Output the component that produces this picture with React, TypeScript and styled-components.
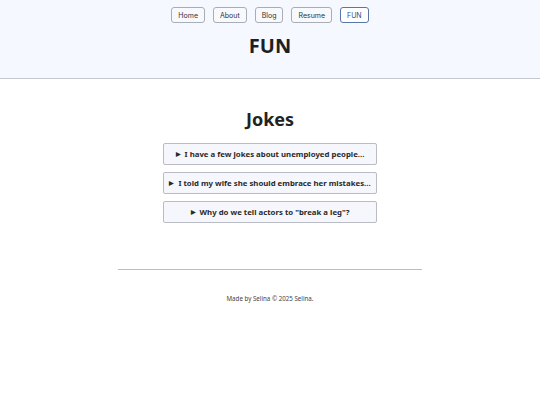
import styled, { createGlobalStyle } from "styled-components";

const GlobalStyle = createGlobalStyle`
    body {
        margin: 0;
        background: #ffffff;
        font-family: "Noto Sans", "Open Sans", sans-serif;
        color: #222222;
    }
`;

const Header = styled.header`
    background-color: #f5f8ff;
    border-bottom: 1px solid #c4c7cf;
    padding: 7px 0 0;
    height: 71px;
    display: flex;
    flex-direction: column;
    align-items: center;
`;

const Nav = styled.nav`
    display: flex;
    gap: 8px;
`;

const NavButton = styled.a<{ $active?: boolean }>`
    display: inline-flex;
    align-items: center;
    height: 14px;
    padding: 0 6px;
    border: 1px solid ${(p) => (p.$active ? "#5a76a8" : "#a9adb6")};
    border-radius: 3px;
    background: ${(p) => (p.$active ? "#ffffff" : "#f7f9fd")};
    color: ${(p) => (p.$active ? "#2d4f8a" : "#333333")};
    font-family: "Inter", "Noto Sans", sans-serif;
    font-size: 7px;
    text-decoration: none;
`;

const PageTitle = styled.h1`
    margin: 9px 0 0;
    font-size: 20px;
    font-weight: 700;
    color: #1f1f1f;
`;

const Main = styled.main`
    display: flex;
    flex-direction: column;
    align-items: center;
    padding-top: 28px;
`;

const SectionTitle = styled.h2`
    margin: 0 0 11px;
    font-size: 18px;
    line-height: 25px;
    font-weight: 700;
    color: #222222;
`;

const JokeList = styled.div`
    display: flex;
    flex-direction: column;
    gap: 7px;
    width: 214px;
`;

const Joke = styled.details`
    border: 1px solid #b9bcc4;
    border-radius: 2px;
    background: #f5f7fc;
`;

const JokeSummary = styled.summary`
    list-style: none;
    height: 20px;
    display: flex;
    align-items: center;
    justify-content: center;
    font-size: 7.8px;
    font-weight: 700;
    color: #2a2a2a;
    cursor: pointer;
    white-space: nowrap;

    &::-webkit-details-marker {
        display: none;
    }
    &::before {
        content: "▶";
        font-size: 6px;
        margin-right: 4px;
    }
`;

const Footer = styled.footer`
    display: flex;
    flex-direction: column;
    align-items: center;
    margin-top: 46px;
`;

const Rule = styled.hr`
    width: 304px;
    margin: 0;
    border: none;
    border-top: 1px solid #bdbdbd;
`;

const FooterText = styled.p`
    margin: 24px 0 0;
    font-size: 6.2px;
    color: #444444;
`;

const pages = ["Home", "About", "Blog", "Resume", "FUN"];

const jokes = [
    "I have a few jokes about unemployed people...",
    "I told my wife she should embrace her mistakes...",
    "Why do we tell actors to \"break a leg\"?",
];

const App = () => {
    return (
        <>
            <GlobalStyle />
            <Header>
                <Nav>
                    {pages.map((page) => (
                        <NavButton key={page} href="#" $active={page === "FUN"}>
                            {page}
                        </NavButton>
                    ))}
                </Nav>
                <PageTitle>FUN</PageTitle>
            </Header>
            <Main>
                <SectionTitle>Jokes</SectionTitle>
                <JokeList>
                    {jokes.map((joke) => (
                        <Joke key={joke}>
                            <JokeSummary>{joke}</JokeSummary>
                        </Joke>
                    ))}
                </JokeList>
            </Main>
            <Footer>
                <Rule />
                <FooterText>Made by Selina © 2025 Selina.</FooterText>
            </Footer>
        </>
    );
};

export default App;
